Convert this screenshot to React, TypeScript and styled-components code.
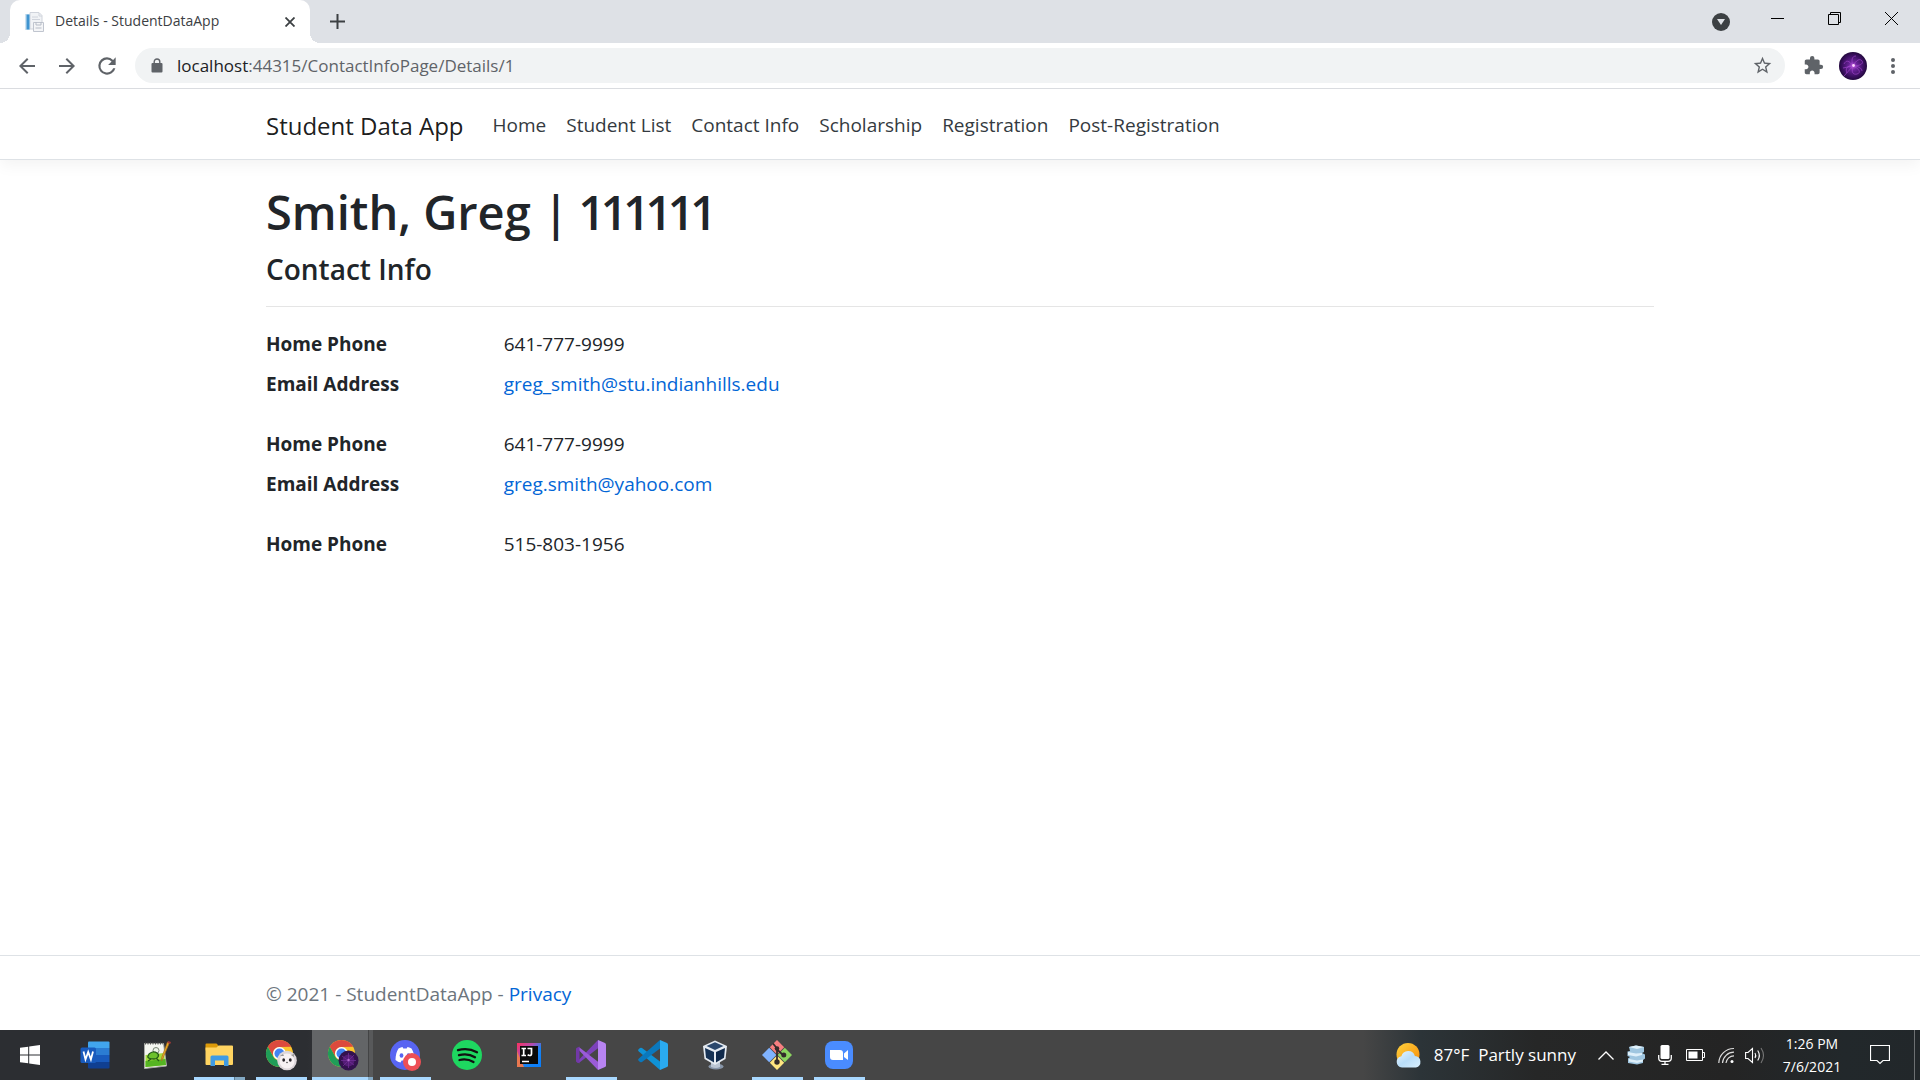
import React from 'react';
import styled, { createGlobalStyle } from 'styled-components';

const Global = createGlobalStyle`
  *, *::before, *::after { box-sizing: border-box; }
  html, body { margin: 0; }
  body { font-family: "Open Sans", "Noto Sans", "Liberation Sans", sans-serif; color: #212529; background: #fff; }
  button { font: inherit; color: inherit; border: 0; padding: 0; background: none; cursor: pointer; }
  svg { display: block; flex: none; }
`;

const Screen = styled.div`
  display: flex;
  flex-direction: column;
  height: 100vh;
`;

/* ---------- browser chrome ---------- */

const TabStrip = styled.div`
  display: flex;
  flex: none;
  height: 43px;
  padding-left: 10px;
  background: #dee1e6;
`;

const Tab = styled.div`
  position: relative;
  display: flex;
  align-items: center;
  gap: 10px;
  width: 300px;
  padding: 0 12px 0 15px;
  border-radius: 10px 10px 0 0;
  background: #fff;
  color: #3c4043;
  font-size: 14px;

  &::before, &::after {
    content: "";
    position: absolute;
    bottom: 0;
    width: 10px;
    height: 10px;
  }
  &::before { left: -10px; background: radial-gradient(circle at 0 0, transparent 10px, #fff 10px); }
  &::after { right: -10px; background: radial-gradient(circle at 100% 0, transparent 10px, #fff 10px); }
`;

const TabTitle = styled.span`
  flex: 1;
  line-height: 20px;
  padding-bottom: 2px;
  white-space: nowrap;
`;

const ChromeButton = styled.button<{ $w?: number; $color?: string }>`
  display: flex;
  flex: none;
  align-items: center;
  justify-content: center;
  width: ${p => p.$w ?? 16}px;
  color: ${p => p.$color ?? '#3c4043'};
`;

const WindowControls = styled.div`
  display: flex;
  margin-left: auto;
  height: 37px;
`;

const Toolbar = styled.div`
  display: flex;
  flex: none;
  align-items: center;
  height: 46px;
  padding: 0 7px;
  border-bottom: 1px solid #dadce0;
  background: #fff;
`;

const AddressBar = styled.label`
  display: flex;
  flex: 1;
  align-items: center;
  height: 35px;
  margin: 0 8px;
  padding: 0 8px 0 16px;
  border-radius: 18px;
  background: #f1f3f4;
`;

const Url = styled.div`
  position: relative;
  flex: 1;
  margin-left: 14px;
  height: 24px;
  font-size: 17px;
  line-height: 24px;
`;

const UrlText = styled.div`
  position: absolute;
  inset: 0;
  color: #5f6368;
  pointer-events: none;
  b { font-weight: 400; color: #202124; }
`;

const UrlInput = styled.input`
  width: 100%;
  height: 24px;
  padding: 0;
  border: 0;
  outline: 0;
  background: transparent;
  color: transparent;
  font: inherit;
`;

/* ---------- web page ---------- */

const Page = styled.div`
  display: flex;
  flex: 1;
  flex-direction: column;
  min-height: 0;
  overflow: hidden;
`;

const Container = styled.div`
  width: 100%;
  max-width: 1426px;
  margin: 0 auto;
  padding: 0 19px;
`;

const Header = styled.header`
  border-bottom: 1px solid #dee2e6;
  box-shadow: 0 5px 15px rgba(0, 0, 0, 0.05);
`;

const NavRow = styled(Container)`
  display: flex;
  align-items: center;
  height: 70px;
  padding-top: 3px;
`;

const Brand = styled.a`
  margin-right: 19px;
  color: rgba(0, 0, 0, 0.9);
  font-size: 24px;
  line-height: 36px;
  text-decoration: none;
`;

const NavList = styled.ul`
  display: flex;
  margin: 0;
  padding: 0 0 2px;
  list-style: none;
`;

const NavLink = styled.a`
  padding: 0 10px;
  color: #343a40;
  font-size: 19px;
  line-height: 30px;
  text-decoration: none;
`;

const Main = styled.main`
  flex: 1;
  padding: 22px 0 0;
`;

const Title = styled.h1`
  margin: 0 0 9px;
  font-size: 47px;
  font-variant-numeric: proportional-nums;
  font-weight: 600;
  line-height: 60px;
`;

const Subtitle = styled.h4`
  margin: 0;
  font-size: 28px;
  font-weight: 600;
  line-height: 36px;
`;

const Rule = styled.hr`
  margin: 19px 0 22px;
  border: 0;
  border-top: 1px solid rgba(0, 0, 0, 0.1);
`;

const Details = styled.dl`
  display: grid;
  grid-template-columns: 1fr 5fr;
  row-gap: 10px;
  margin: 0 -19px 30px;
  font-size: 19px;
  line-height: 30px;
`;

const Term = styled.dt`
  padding: 0 19px;
  font-weight: 700;
`;

const Value = styled.dd`
  margin: 0;
  padding: 0 19px;
`;

const Link = styled.a`
  color: #0366d6;
  text-decoration: none;
`;

const Footer = styled.footer`
  padding-top: 2px;
  border-top: 1px solid #dee2e6;
  color: #6c757d;
  font-size: 19px;
  line-height: 72px;
`;

/* ---------- taskbar ---------- */

const Taskbar = styled.nav`
  display: flex;
  flex: none;
  height: 50px;
  background: linear-gradient(90deg, #2c2e32 0, #2c2e32 16%, #464646 19%, #464646 71%, #2c3438 74%, #262727 80%, #242424 90%, #22282b 96%, #22272a 100%);
  color: #fff;
`;

const AppList = styled.div`
  display: flex;
  margin-left: 4px;
`;

const underline = {
  none: 'none',
  single: 'linear-gradient(#a8d8ff, #a8d8ff) 50% 100% / 51px 3px no-repeat',
  grouped: 'linear-gradient(90deg, #a8d8ff 40px, #5d7c92 40px, #5d7c92 41px, #83a9c4 41px) 50% 100% / 51px 3px no-repeat',
  active: 'linear-gradient(90deg, #a8d8ff 56px, #83a9c4 56px) 0 100% / 61px 3px no-repeat, linear-gradient(90deg, #636567 56px, #434445 56px, #434445 57px, #58595a 57px) 0 0 / 61px 50px no-repeat',
};

const AppButton = styled.button<{ $state?: keyof typeof underline }>`
  display: flex;
  align-items: center;
  justify-content: center;
  width: 62px;
  height: 50px;
  background: ${p => underline[p.$state ?? 'none']};
`;

const StartButton = styled(AppButton)`
  width: 60px;
`;

const Tray = styled.div`
  display: flex;
  align-items: center;
  margin-left: auto;
`;

const Weather = styled.button`
  display: flex;
  align-items: center;
  height: 50px;
  margin-right: 15px;
  gap: 12px;
  font-size: 17px;
  line-height: 24px;
  white-space: pre;
`;

const TrayButton = styled.button<{ $w?: number }>`
  display: flex;
  align-items: center;
  justify-content: center;
  width: ${p => p.$w ?? 30}px;
  height: 50px;
`;

const Clock = styled.button`
  width: 84px;
  font-size: 14px;
  line-height: 23px;
  text-align: center;
`;

const ShowDesktop = styled.button`
  width: 6px;
  height: 50px;
  margin-left: 8px;
  border-left: 1px solid #6d7072;
`;

/* ---------- artwork ---------- */

const Favicon = () => (
  <svg width="20" height="20" viewBox="0 0 20 20">
    <path d="M5 .5h9l3 3V17H5z" fill="#f1f3f6" stroke="#d0d4dc" />
    <path d="M14 1v3h3M7 5h6M7 7.500h8" fill="none" stroke="#d0d4dc" />
    <path d="M0 2h5v16H0z" fill="#cfe3f1" /><path d="M1.500 2.500h3v15h-3z" fill="#3f94d0" />
    <path d="M8.500 10.500h10v9h-10z" fill="#f4f5f7" stroke="#c0c5cf" />
    <path d="M11 10v3h5v-3M10.500 16h6" fill="none" stroke="#b6bcc7" />
  </svg>
);

const ChromeLogo = ({ badge }: { badge: 'panda' | 'purple' }) => (
  <svg width="32" height="32" viewBox="0 0 32 32">
    <circle cx="14.500" cy="14.500" r="13.500" fill="#fbc52d" />
    <path d="M2.800 7.700A13.500 13.500 0 0 1 26.200 7.700L14.500 8A7 7 0 0 0 8.500 18z" fill="#dc4a3d" />
    <path d="M2.800 7.700A13.500 13.500 0 0 0 14.500 28L20.500 18a7 7 0 0 1-12 0z" fill="#1f9d58" />
    <circle cx="14.500" cy="14.500" r="6.500" fill="#fff" />
    <circle cx="14.500" cy="14.500" r="5" fill="#4284f3" />
    {badge === 'panda' ? (
      <g>
        <circle cx="22" cy="21.500" r="9.800" fill="#ddd6da" />
        <circle cx="22" cy="22" r="7.500" fill="#f7f1f3" />
        <path d="M15 17l3-2 1 2zM26 16l3-1v3z" fill="#999" />
        <ellipse cx="18.700" cy="21" rx="1.400" ry="1.700" fill="#29252a" />
        <ellipse cx="25.300" cy="21" rx="1.400" ry="1.700" fill="#29252a" />
        <circle cx="22" cy="23.500" r=".8" fill="#444" />
      </g>
    ) : (
      <g>
        <circle cx="21.500" cy="21.500" r="10" fill="#33124e" />
        <circle cx="21.500" cy="21.500" r="6" fill="#541c76" />
        <path d="M15 17l12 9M27 16l-11 11M21.500 14v15M14 21.500h15" stroke="#6f2f94" strokeWidth=".8" />
        <circle cx="21.500" cy="21" r="1.200" fill="#b46bd0" />
      </g>
    )}
  </svg>
);

const Avatar = () => (
  <svg width="28" height="28" viewBox="0 0 28 28">
    <defs>
      <radialGradient id="nebula">
        <stop offset="0" stopColor="#c25be0" /><stop offset=".3" stopColor="#6a2399" />
        <stop offset=".75" stopColor="#3d1063" /><stop offset="1" stopColor="#22083d" />
      </radialGradient>
    </defs>
    <circle cx="14" cy="14" r="14" fill="url(#nebula)" />
    <path d="M14 14C10 8 7 8 5 12M14 14c-6-1-8 3-6 7M14 14c-2 6 0 9 4 8s3-5-4-8c3-6 7-8 9-5s-3 5-9 5c5 0 9 2 9 5M14 14C12 8 13 4 17 4M14 14L5 24M4 16l10-2" fill="none" stroke="#a548cf" strokeOpacity=".8" strokeWidth=".8" />
    <circle cx="14.500" cy="13.500" r="1.400" fill="#ffd5ff" />
  </svg>
);

const Svg24 = ({ size = 21, children }: { size?: number; children: React.ReactNode }) => (
  <svg width={size} height={size} viewBox="0 0 24 24" fill="currentColor">{children}</svg>
);

const WordLogo = () => (
  <svg width="30" height="28" viewBox="0 0 30 28">
    <path d="M9 .5h19.500q1 0 1 1V7H8V1.500q0-1 1-1z" fill="#41a5ee" /><path d="M8 7h21.500v7H8z" fill="#2b7cd3" />
    <path d="M8 14h21.500v7H8z" fill="#185abd" /><path d="M8 21h21.500v5.500q0 1-1 1H9q-1 0-1-1z" fill="#103f91" />
    <rect x=".5" y="6.500" width="15.500" height="15.500" rx="1.500" fill="#185abd" />
    <path d="M3.500 10.500l2 8 2.700-7.500 2.700 7.500 2.100-8" fill="none" stroke="#fff" strokeWidth="1.800" />
  </svg>
);

const NotepadLogo = () => (
  <svg width="29" height="28" viewBox="0 0 29 28">
    <path d="M1.500 2.500h19l3 22.500-22 2.500z" fill="#f4f6f0" stroke="#a9aaa5" />
    <path d="M2.500 14l18.500-2 1.500 12-20 2z" fill="#a5dc3c" /><path d="M2.500 20l20-2 .5 6-20.500 2z" fill="#55b422" />
    <path d="M2 2.500h18" stroke="#555" strokeWidth="2" strokeDasharray="1 1.500" />
    <circle cx="13" cy="9.500" r="3" fill="#eef3e8" stroke="#7a8575" />
    <path d="M5 15c1-4 6-5 9-3s1 6-3 6-7-1-6-3zM8 18l-3 2m8-3l3 3" fill="#6cc02b" stroke="#255b16" strokeWidth="1.300" />
    <path d="M26.500 1.500L20 17l-1.500 3 .2-3.500L24.500 1z" fill="#efad25" stroke="#a8701c" strokeWidth=".7" /><path d="M25 0l3 1-.8 2-2.700-1z" fill="#9f3937" />
  </svg>
);

const FolderLogo = () => (
  <svg width="28" height="24" viewBox="0 0 28 24">
    <path d="M.5 1.500q0-1 1-1H11q1 0 1.500 1l1 2H28v4H.5z" fill="#dc9a09" /><path d="M.5 4.500h11l2-2H27q1 0 1 1V21q0 1-1 1H1.500q-1 0-1-1z" fill="#ffd461" />
    <path d="M5.500 23V14q0-1.500 1.500-1.500h15q1.500 0 1.500 1.500v9h-4.500v-5.500H10V23z" fill="#3f9be3" />
  </svg>
);

const DiscordLogo = () => (
  <svg width="31" height="31" viewBox="0 0 31 31">
    <circle cx="15" cy="15" r="15" fill="#5865f2" />
    <path d="M5.500 20c0-5 1.300-9 3-11.500Q11 7 12.500 7l.8 1.400h3.400L17.500 7q1.500 0 4 1.500c1.700 2.500 3 6.500 3 11.500Q22 22 19.500 22.500L18.300 20.500h-6.600l-1.200 2Q8 22 5.500 20z" fill="#fff" />
    <ellipse cx="11.500" cy="15.500" rx="1.900" ry="2.200" fill="#5865f2" /><ellipse cx="18.500" cy="15.500" rx="1.900" ry="2.200" fill="#5865f2" />
    <circle cx="22" cy="22" r="9" fill="#ed4f56" /><circle cx="22" cy="22" r="4" fill="#fff" />
  </svg>
);

const SpotifyLogo = () => (
  <svg width="30" height="30" viewBox="0 0 30 30">
    <circle cx="15" cy="15" r="15" fill="#1ed760" />
    <path d="M6 10.200q10-2.700 19 2M7 15.200q9-2.200 16 2M7.500 20q7.500-1.800 14 2" fill="none" stroke="#111" strokeLinecap="round" strokeWidth="2.300" />
  </svg>
);

const IntellijLogo = () => (
  <svg width="24" height="24" viewBox="0 0 24 24">
    <defs><linearGradient id="ij" x1="0" y1="0" x2="1" y2="1"><stop offset="0" stopColor="#fe315d" /><stop offset=".35" stopColor="#b14bb2" /><stop offset=".6" stopColor="#1784f3" /><stop offset="1" stopColor="#087cfa" /></linearGradient></defs>
    <path d="M0 0h24v24H0z" fill="url(#ij)" /><path d="M0 8l7 16H0z" fill="#e97850" /><path d="M3 3h18v18H3z" fill="#0a0a0a" />
    <path d="M4.500 5.500h4.500M6.700 5.500v7M4.500 12.500h4.500M10.500 5.500h4v5.300q0 1.700-1.800 1.700-1.200 0-2-.8M5 18.500h7" fill="none" stroke="#fff" strokeWidth="1.700" />
  </svg>
);

const VisualStudioLogo = () => (
  <svg width="30" height="30" viewBox="0 0 30 30">
    <path d="M1 21.800L22 0v8.300L3.500 22.500z" fill="#7c41ba" />
    <path d="M1 8.200L3.500 7.500 22 21.700V30z" fill="#9a5bd8" />
    <path d="M0 9q0-.8.8-1.200L3.500 6.500V23.500L.8 22.200Q0 21.800 0 21z" fill="#7238a8" />
    <path d="M22 0l7 3q1 .5 1 1.500v21q0 1-1 1.500l-7 3z" fill="#b884f2" />
  </svg>
);

const VSCodeLogo = () => (
  <svg width="30" height="30" viewBox="0 0 30 30">
    <path d="M.6 11.300Q-.4 10.200.6 9.200L2 8q1-.7 2 0l18 13.500V30z" fill="#0f92d6" />
    <path d="M.6 18.700Q-.4 19.800.6 20.800L2 22q1 .7 2 0L22 8.500V0z" fill="#0a78bd" />
    <path d="M22 0l7 3q1 .5 1 1.500v21q0 1-1 1.500l-7 3z" fill="#2aaaf0" />
  </svg>
);

const VirtualBoxLogo = () => (
  <svg width="26" height="30" viewBox="0 0 26 30">
    <ellipse cx="14" cy="26.500" rx="7.500" ry="3" fill="#8795a8" /><path d="M9 22h9v5q-4 2-9 0z" fill="#bac5d3" />
    <path d="M13 .5l12 5.500-1.500 13L13 25 2.500 19 1 6z" fill="#e5ebf2" />
    <path d="M13 2.200l8.500 3.800L13 10 4.500 6z" fill="#2b486d" /><path d="M3 8l9 4v10.500l-8-4.700z" fill="#163255" /><path d="M23 8l-9 4v10.500l8-4.700z" fill="#0f294b" />
  </svg>
);

const GitLogo = () => (
  <svg width="30" height="30" viewBox="0 0 30 30">
    <path d="M15 0l7.200 7.200L15 14.400 7.800 7.200z" fill="#f77f80" /><path d="M7.200 7.800l7.200 7.200-7.200 7.200L0 15z" fill="#80b3ff" />
    <path d="M22.800 7.800L30 15l-7.200 7.200-7.200-7.200z" fill="#8bd460" /><path d="M15 15.600l7.200 7.200L15 30l-7.200-7.200z" fill="#ffe680" />
    <path d="M11 3.500l4 5v14M15 9.500l6.500 6" fill="none" stroke="#332c2b" strokeWidth="1.800" />
    <circle cx="15" cy="8.500" r="2.300" fill="#332c2b" /><circle cx="21.800" cy="15" r="2.500" fill="#332c2b" /><circle cx="15" cy="22" r="2.700" fill="#332c2b" />
  </svg>
);

const ZoomLogo = () => (
  <svg width="28" height="28" viewBox="0 0 28 28">
    <rect width="28" height="28" rx="8" fill="#4a8cff" />
    <path d="M5 9h10q3 0 3 3v7H8q-3 0-3-3zM19 12.500L23 9v10l-4-3z" fill="#fff" />
  </svg>
);

const apps: { name: string; icon: React.ReactNode; state?: keyof typeof underline }[] = [
  { name: 'Word', icon: <WordLogo /> },
  { name: 'Notepad++', icon: <NotepadLogo /> },
  { name: 'File Explorer', icon: <FolderLogo />, state: 'grouped' },
  { name: 'Chrome', icon: <ChromeLogo badge="panda" />, state: 'single' },
  { name: 'Chrome, Details', icon: <ChromeLogo badge="purple" />, state: 'active' },
  { name: 'Discord', icon: <DiscordLogo />, state: 'single' },
  { name: 'Spotify', icon: <SpotifyLogo /> },
  { name: 'IntelliJ IDEA', icon: <IntellijLogo /> },
  { name: 'Visual Studio', icon: <VisualStudioLogo />, state: 'single' },
  { name: 'Visual Studio Code', icon: <VSCodeLogo /> },
  { name: 'VirtualBox', icon: <VirtualBoxLogo /> },
  { name: 'Git', icon: <GitLogo />, state: 'single' },
  { name: 'Zoom', icon: <ZoomLogo />, state: 'single' },
];

const navItems = ['Home', 'Student List', 'Contact Info', 'Scholarship', 'Registration', 'Post-Registration'];

const contacts: { phone: string; email?: string }[] = [
  { phone: '641-777-9999', email: 'greg_smith@stu.indianhills.edu' },
  { phone: '641-777-9999', email: 'greg.smith@yahoo.com' },
  { phone: '515-803-1956' },
];

export default function App() {
  return (
    <Screen>
      <Global />
      <TabStrip>
        <Tab>
          <Favicon />
          <TabTitle>Details - StudentDataApp</TabTitle>
          <ChromeButton aria-label="Close tab">
            <svg width="10" height="10" viewBox="0 0 10 10"><path d="M.5.5l9 9M9.500.5l-9 9" stroke="currentColor" strokeWidth="1.800" /></svg>
          </ChromeButton>
        </Tab>
        <ChromeButton $w={54} aria-label="New tab">
          <svg width="15" height="15" viewBox="0 0 15 15"><path d="M7.500 0v15M0 7.500h15" stroke="currentColor" strokeWidth="2" /></svg>
        </ChromeButton>
        <WindowControls>
          <ChromeButton $w={54} aria-label="Search tabs">
            <svg width="18" height="24" viewBox="0 0 18 24"><circle cx="9" cy="15" r="9" fill="#3c4043" /><path d="M5 12h8l-4 6z" fill="#dee1e6" /></svg>
          </ChromeButton>
          <ChromeButton $w={58} $color="#000" aria-label="Minimize">
            <svg width="13" height="13" viewBox="0 0 13 13"><path d="M0 6.500h13" stroke="currentColor" /></svg>
          </ChromeButton>
          <ChromeButton $w={56} $color="#000" aria-label="Restore">
            <svg width="13" height="13" viewBox="0 0 13 13" fill="none" stroke="currentColor"><path d="M.5 2.500h10v10H.5zM2.500 2V.5h10v10H11" /></svg>
          </ChromeButton>
          <ChromeButton $w={58} $color="#000" aria-label="Close window">
            <svg width="13" height="13" viewBox="0 0 13 13"><path d="M0 0l13 13M13 0L0 13" stroke="currentColor" /></svg>
          </ChromeButton>
        </WindowControls>
      </TabStrip>

      <Toolbar>
        <ChromeButton $w={40} $color="#5f6368" aria-label="Back"><Svg24 size={24}><path d="M20 11H7.830l5.590-5.590L12 4l-8 8 8 8 1.410-1.410L7.830 13H20v-2z" /></Svg24></ChromeButton>
        <ChromeButton $w={40} $color="#5f6368" aria-label="Forward"><Svg24 size={24}><path d="M12 4l-1.410 1.410L16.170 11H4v2h12.170l-5.580 5.590L12 20l8-8z" /></Svg24></ChromeButton>
        <ChromeButton $w={40} $color="#5f6368" aria-label="Reload"><Svg24 size={26}><path d="M17.650 6.350A7.958 7.958 0 0 0 12 4a8 8 0 1 0 7.730 10h-2.080A6 6 0 1 1 12 6c1.660 0 3.140.69 4.220 1.780L13 11h7V4l-2.350 2.350z" /></Svg24></ChromeButton>
        <AddressBar>
          <svg width="12" height="15" viewBox="0 0 12 15" fill="#5f6368"><path d="M1.500 5h9q1 0 1 1v7.500q0 1-1 1h-9q-1 0-1-1V6q0-1 1-1z" /><path d="M3.200 6V3.800a2.800 2.800 0 0 1 5.600 0V6" fill="none" stroke="#5f6368" strokeWidth="1.400" /></svg>
          <Url>
            <UrlText><b>localhost</b>:44315/ContactInfoPage/Details/1</UrlText>
            <UrlInput aria-label="Address" />
          </Url>
          <ChromeButton $w={30} $color="#5f6368" aria-label="Bookmark this page"><Svg24 size={21}><path d="M22 9.240l-7.190-.62L12 2 9.190 8.630 2 9.240l5.460 4.730L5.820 21 12 17.270 18.180 21l-1.630-7.030L22 9.240zM12 15.400l-3.760 2.270 1-4.280-3.320-2.880 4.380-.38L12 6.100l1.710 4.040 4.380.38-3.320 2.880 1 4.280L12 15.400z" /></Svg24></ChromeButton>
        </AddressBar>
        <ChromeButton $w={40} $color="#5f6368" aria-label="Extensions"><Svg24 size={21}><path d="M20.500 11H19V7c0-1.100-.9-2-2-2h-4V3.500a2.500 2.500 0 0 0-5 0V5H4c-1.100 0-1.990.9-1.990 2v3.800H3.500c1.490 0 2.700 1.210 2.700 2.700s-1.210 2.700-2.700 2.700H2V20c0 1.100.9 2 2 2h3.800v-1.500c0-1.490 1.210-2.700 2.700-2.700s2.700 1.210 2.700 2.700V22H17c1.100 0 2-.9 2-2v-4h1.500a2.500 2.500 0 0 0 0-5z" /></Svg24></ChromeButton>
        <ChromeButton $w={40} aria-label="Profile"><Avatar /></ChromeButton>
        <ChromeButton $w={40} $color="#5f6368" aria-label="Menu"><Svg24 size={24}><circle cx="12" cy="6" r="2" /><circle cx="12" cy="12" r="2" /><circle cx="12" cy="18" r="2" /></Svg24></ChromeButton>
      </Toolbar>

      <Page>
        <Header>
          <NavRow>
            <Brand href="#">Student Data App</Brand>
            <nav>
              <NavList>
                {navItems.map(item => <li key={item}><NavLink href="#">{item}</NavLink></li>)}
              </NavList>
            </nav>
          </NavRow>
        </Header>
        <Main>
          <Container>
            <Title>Smith, Greg | 111111</Title>
            <Subtitle>Contact Info</Subtitle>
            <Rule />
            {contacts.map((c, i) => (
              <Details key={i}>
                <Term>Home Phone</Term>
                <Value>{c.phone}</Value>
                {c.email && <Term>Email Address</Term>}
                {c.email && <Value><Link href={`mailto:${c.email}`}>{c.email}</Link></Value>}
              </Details>
            ))}
          </Container>
        </Main>
        <Footer>
          <Container>© 2021 - StudentDataApp - <Link href="#">Privacy</Link></Container>
        </Footer>
      </Page>

      <Taskbar aria-label="Taskbar">
        <StartButton aria-label="Start">
          <svg width="20" height="20" viewBox="0 0 20 20" fill="#fff"><path d="M0 2.800L8.200 1.700v7.800H0zM9.200 1.500L20 0v9.500H9.200zM0 10.500h8.200v7.800L0 17.200zM9.200 10.500H20V20L9.200 18.500z" /></svg>
        </StartButton>
        <AppList>
          {apps.map(a => (
            <AppButton key={a.name} aria-label={a.name} $state={a.state}>{a.icon}</AppButton>
          ))}
        </AppList>
        <Tray>
          <Weather>
            <svg width="26" height="25" viewBox="0 0 26 25">
              <defs>
                <linearGradient id="sun" x1="0" y1="0" x2="1" y2="1"><stop offset="0" stopColor="#ffd23e" /><stop offset="1" stopColor="#f58a07" /></linearGradient>
                <linearGradient id="cloud" x1="0" y1="0" x2="1" y2="1"><stop offset="0" stopColor="#e9f6ff" /><stop offset=".5" stopColor="#b9def9" /><stop offset="1" stopColor="#d9effd" /></linearGradient>
              </defs>
              <circle cx="12" cy="11.500" r="11.500" fill="url(#sun)" />
              <path d="M6 24.500a5.700 5.700 0 0 1-.6-11.300 7 7 0 0 1 13.500-.3A5.900 5.900 0 0 1 20 24.500z" fill="url(#cloud)" />
            </svg>
            <span>{'87°F  Partly sunny'}</span>
          </Weather>
          <TrayButton aria-label="Show hidden icons"><svg width="16" height="9" viewBox="0 0 16 9"><path d="M.5 8.500L8 1l7.500 7.500" fill="none" stroke="#fff" strokeWidth="1.300" /></svg></TrayButton>
          <TrayButton aria-label="Server"><svg width="19" height="20" viewBox="0 0 19 20"><path d="M2 2l7-1.500L17 2v5l-2 1 3 1.500v4L16 15v3l-6 1.500L1 18v-4.500L3 12 .5 11V6.500L3 6z" fill="#9fc6e0" /><path d="M2 2l7-1.500L17 2l-7 2zM1 7l8 1.500L15 8v2L9 11.500 1 10zM2 14l8 1.500 6-1v2L10 18l-8-1.500z" fill="#dff0fa" /></svg></TrayButton>
          <TrayButton $w={28} aria-label="Microphone"><svg width="14" height="20" viewBox="0 0 14 20"><rect x="2.500" width="9" height="14" rx="1.500" fill="#fff" /><path d="M.7 10v3q0 3.300 3.300 3.300h6q3.300 0 3.300-3.300v-3M7 16v3M3.500 19.300h7" fill="none" stroke="#fff" strokeWidth="1.300" /></svg></TrayButton>
          <TrayButton $w={33} aria-label="Battery"><svg width="19" height="12" viewBox="0 0 19 12"><path d="M.5.5h16v11H.5zM16.500 3.500h2v5h-2" fill="none" stroke="#fff" /><path d="M2.500 2.500h9v7h-9z" fill="#fff" /></svg></TrayButton>
          <TrayButton $w={28} aria-label="Network"><svg width="17" height="17" viewBox="0 0 17 17" fill="none" stroke="#ddd" strokeWidth="1.200"><path d="M.8 16A15 15 0 0 1 16 1.500M4.500 16A11.500 11.500 0 0 1 16 5.200M8 16a8 8 0 0 1 8-7.200" /><circle cx="14" cy="14.500" r="1.500" fill="#fff" stroke="none" /></svg></TrayButton>
          <TrayButton $w={30} aria-label="Volume"><svg width="20" height="17" viewBox="0 0 20 17" fill="none" stroke="#fff" strokeWidth="1.100"><path d="M.6 5.500H3L7.500 1.500v14L3 11.500H.6zM10 6q1.500 2.500 0 5M12.700 3.500q3.300 5 0 10" /><path d="M16 1q5 7.500 0 15" stroke="#777" /></svg></TrayButton>
          <Clock>1:26 PM<br />7/6/2021</Clock>
          <TrayButton $w={52} aria-label="Notifications"><svg width="20" height="20" viewBox="0 0 20 20"><path d="M.5.5h19v15H13l-3 3-3-3H.5z" fill="none" stroke="#fff" strokeWidth="1.200" /></svg></TrayButton>
          <ShowDesktop aria-label="Show desktop" />
        </Tray>
      </Taskbar>
    </Screen>
  );
}
